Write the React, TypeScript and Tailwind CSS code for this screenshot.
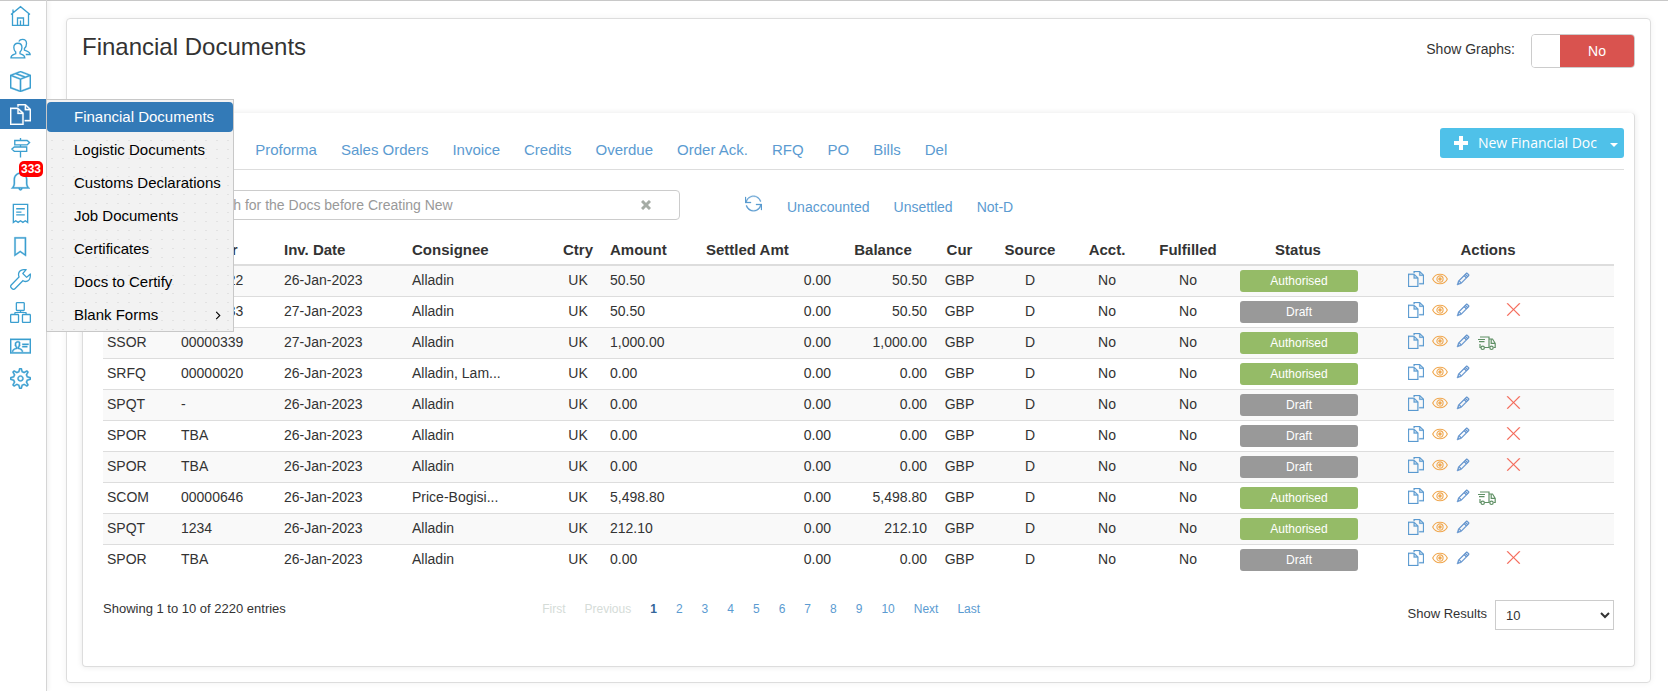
import React, { useState } from 'react';
import {
  TfiPackage,
  TfiFiles,
  TfiBell,
  TfiBookmark,
  TfiSettings,
  TfiPencil,
  TfiClose,
  TfiReload,
  TfiIdBadge,
} from 'react-icons/tfi';
import { SlWrench, SlOrganization } from 'react-icons/sl';

type IconProps = { className?: string };

type Doc = {
  type: string;
  number: string;
  date: string;
  consignee: string;
  amount: string;
  status: 'Authorised' | 'Draft';
  canDelete?: boolean;
  canShip?: boolean;
};

const HomeIcon: React.FC<IconProps> = ({ className }) => (
  <svg viewBox="0 0 21 21" className={className} fill="none" stroke="currentColor" strokeWidth="1.3">
    <path d="M1 9.500L10.500 1.700L20 9.500M2.500 8.500V20.300h16V8.500M3 7.500V4.500M7.500 20v-7h6v7M10.500 15.500v4.500" />
  </svg>
);

const UsersIcon: React.FC<IconProps> = ({ className }) => (
  <svg viewBox="0 0 22 22" className={className} fill="none" stroke="currentColor" strokeWidth="1.4">
    <path d="M1 20.800c0-3 2.500-3.300 5-4.300v-1.700C4.500 13.500 4 11.500 4 10c0-3 1.700-4.500 4.300-4.500s4.200 1.500 4.200 4.500c0 1.500-.5 3.500-2 4.800v1.700c2.500 1 5 1.300 5 4.300z" />
    <path d="M9.200 3.700c.8-1.500 2-2.200 3.800-2.200 2.800 0 4.300 1.700 4.300 4.300 0 2-.8 4-2.200 5.300v1.500c2.500 1 6 1.500 6 4.700h-4.600" />
  </svg>
);

const SignpostIcon: React.FC<IconProps> = ({ className }) => (
  <svg viewBox="0 0 22 22" className={className} fill="none" stroke="currentColor" strokeWidth="1.4">
    <path d="M5 3.700h13l2.500 2.200L18 8.200H5zM17.500 10.500h-13L2 12.700 4.500 15h13zM11 1v2.700M11 8.200v2.300M11 15v6.500" />
  </svg>
);

const ReceiptIcon: React.FC<IconProps> = ({ className }) => (
  <svg viewBox="0 0 22 22" className={className} fill="none" stroke="currentColor" strokeWidth="1.4">
    <path d="M3.500 1.500h15v18.800l-2.500-1.700-2.500 1.700-2.500-1.700-2.500 1.700-2.500-1.700-2.500 1.700z" />
    <path d="M6.500 6h9M6.500 9.500h5.500M6.500 12.500h9" />
  </svg>
);

const EyeIcon: React.FC<IconProps> = ({ className }) => (
  <svg viewBox="0 0 16 16" className={className} fill="none" stroke="currentColor" strokeWidth="1.100">
    <path d="M.7 8C2 5 4.700 3.200 8 3.200S14 5 15.300 8C14 11 11.300 12.800 8 12.800S2 11 .7 8z" />
    <circle cx="8" cy="8" r="3.100" />
    <circle cx="8" cy="8" r="1.200" fill="currentColor" />
  </svg>
);

const TruckIcon: React.FC<IconProps> = ({ className }) => (
  <svg viewBox="0 0 18 18" className={className} fill="none" stroke="currentColor" strokeWidth="1.200">
    <path d="M2 3h9v10.500M0 5.500h7M1 7.700h5.500M2 10v3.500h1M6.500 13.500h5M11 5h3.500l2.700 4.300v4.200h-1.700M13.200 5.500v3.800h4" />
    <circle cx="4.700" cy="13.800" r="1.700" />
    <circle cx="13.500" cy="13.800" r="1.700" />
  </svg>
);

const docs: Doc[] = [
  { type: 'SINV', number: '00000322', date: '26-Jan-2023', consignee: 'Alladin', amount: '50.50', status: 'Authorised' },
  { type: 'SINV', number: '00000333', date: '27-Jan-2023', consignee: 'Alladin', amount: '50.50', status: 'Draft', canDelete: true },
  { type: 'SSOR', number: '00000339', date: '27-Jan-2023', consignee: 'Alladin', amount: '1,000.00', status: 'Authorised', canShip: true },
  { type: 'SRFQ', number: '00000020', date: '26-Jan-2023', consignee: 'Alladin, Lam...', amount: '0.00', status: 'Authorised' },
  { type: 'SPQT', number: '-', date: '26-Jan-2023', consignee: 'Alladin', amount: '0.00', status: 'Draft', canDelete: true },
  { type: 'SPOR', number: 'TBA', date: '26-Jan-2023', consignee: 'Alladin', amount: '0.00', status: 'Draft', canDelete: true },
  { type: 'SPOR', number: 'TBA', date: '26-Jan-2023', consignee: 'Alladin', amount: '0.00', status: 'Draft', canDelete: true },
  { type: 'SCOM', number: '00000646', date: '26-Jan-2023', consignee: 'Price-Bogisi...', amount: '5,498.80', status: 'Authorised', canShip: true },
  { type: 'SPQT', number: '1234', date: '26-Jan-2023', consignee: 'Alladin', amount: '212.10', status: 'Authorised' },
  { type: 'SPOR', number: 'TBA', date: '26-Jan-2023', consignee: 'Alladin', amount: '0.00', status: 'Draft', canDelete: true },
];

const navItems = [
  { label: 'Home', icon: HomeIcon },
  { label: 'Contacts', icon: UsersIcon },
  { label: 'Products', icon: TfiPackage, thin: true },
  { label: 'Documents', icon: TfiFiles, thin: true, active: true },
  { label: 'Logistics', icon: SignpostIcon },
  { label: 'Alerts', icon: TfiBell, thin: true, count: 333 },
  { label: 'Receipts', icon: ReceiptIcon },
  { label: 'Bookmarks', icon: TfiBookmark, thin: true },
  { label: 'Tools', icon: SlWrench },
  { label: 'Organisation', icon: SlOrganization },
  { label: 'Profile', icon: TfiIdBadge, thin: true },
  { label: 'Settings', icon: TfiSettings, thin: true },
];

const menuItems = [
  'Financial Documents',
  'Logistic Documents',
  'Customs Declarations',
  'Job Documents',
  'Certificates',
  'Docs to Certify',
  'Blank Forms',
];

const tabs = ['All', 'Quotations', 'Proforma', 'Sales Orders', 'Invoice', 'Credits', 'Overdue', 'Order Ack.', 'RFQ', 'PO', 'Bills', 'Del'];
const filters = ['Unaccounted', 'Unsettled', 'Not-D'];
const pages = ['1', '2', '3', '4', '5', '6', '7', '8', '9', '10', 'Next', 'Last'];

const Sidebar: React.FC = () => (
  <nav className="relative z-10 w-[47px] shrink-0 border-r border-[#d5d5d5] shadow-[2px_0_4px_rgba(0,0,0,0.05)]">
    <ul className="flex flex-col gap-[3px]">
      {navItems.map(({ label, icon: Icon, thin, active, count }) => (
        <li key={label} className="relative">
          <a
            href="#"
            aria-label={label}
            className={`flex h-[30px] items-center pl-[10px] ${active ? 'bg-[#337ab7] text-white' : 'text-[#3b9fd0]'}`}
          >
            <Icon className={thin ? 'size-[21px] stroke-[0.3]' : 'size-[21px]'} />
          </a>
          {count && (
            <span className="absolute -top-1 left-[19px] rounded-[5px] bg-[#f00] px-[2px] text-xs leading-4 font-bold text-white">
              {count}
            </span>
          )}
          {active && <SubMenu />}
        </li>
      ))}
    </ul>
  </nav>
);

const SubMenu: React.FC = () => (
  <ul className="absolute top-0 left-[46px] z-20 flex w-[188px] flex-col gap-[3px] border border-[#c8c8c8] bg-[#f2f2f2] bg-[radial-gradient(#e2e2e2_1px,transparent_1px)] bg-[size:11px_9px] pt-[2px] pb-[1px]">
    {menuItems.map((item, i) => (
      <li key={item}>
        <a
          href="#"
          className={`flex h-[30px] items-center justify-between rounded pr-3 pl-[27px] text-[15px] whitespace-nowrap ${
            i === 0 ? 'bg-[#337ab7] text-white' : 'text-black'
          }`}
        >
          {item}
          {item === 'Blank Forms' && (
            <svg viewBox="0 0 6 10" className="h-[9px] w-[6px]" fill="none" stroke="currentColor" strokeWidth="1.2">
              <path d="M1 1l4 4-4 4" />
            </svg>
          )}
        </a>
      </li>
    ))}
  </ul>
);

const DocsTable: React.FC = () => (
  <table className="w-full table-fixed text-sm text-[#333]">
    <colgroup>
      <col className="w-[74px]" />
      <col className="w-[103px]" />
      <col className="w-[128px]" />
      <col className="w-[142px]" />
      <col className="w-[56px]" />
      <col className="w-[96px]" />
      <col className="w-[133px]" />
      <col className="w-[96px]" />
      <col className="w-[57px]" />
      <col className="w-[84px]" />
      <col className="w-[70px]" />
      <col className="w-[92px]" />
      <col className="w-[128px]" />
      <col className="w-[252px]" />
    </colgroup>
    <thead>
      <tr className="h-[31px] border-b-2 border-[#ddd] text-[15px] *:px-1 *:pt-[2px] *:whitespace-nowrap">
        <th className="text-left">Type</th>
        <th className="text-left">Number</th>
        <th className="text-left">Inv. Date</th>
        <th className="text-left">Consignee</th>
        <th>Ctry</th>
        <th className="text-left">Amount</th>
        <th className="text-left">Settled Amt</th>
        <th>Balance</th>
        <th>Cur</th>
        <th>Source</th>
        <th>Acct.</th>
        <th>Fulfilled</th>
        <th>Status</th>
        <th>Actions</th>
      </tr>
    </thead>
    <tbody>
      {docs.map((doc, i) => (
        <tr key={i} className="h-[31px] border-b border-[#ddd] *:px-1 last:border-b-0 odd:bg-[#f9f9f9]">
          <td className="pb-px">{doc.type}</td>
          <td className="pb-px">{doc.number}</td>
          <td className="pb-px">{doc.date}</td>
          <td className="pb-px">{doc.consignee}</td>
          <td className="pb-px text-center">UK</td>
          <td className="pb-px">{doc.amount}</td>
          <td className="pb-px text-right">0.00</td>
          <td className="pb-px text-right">{doc.amount}</td>
          <td className="pb-px text-center">GBP</td>
          <td className="pb-px text-center">D</td>
          <td className="pb-px text-center">No</td>
          <td className="pb-px text-center">No</td>
          <td className="pt-px">
            <span
              className={`ml-[2px] block h-[22px] rounded-[3px] text-center text-xs leading-[22px] text-white ${
                doc.status === 'Draft' ? 'bg-[#999]' : 'bg-[#95bb67]'
              }`}
            >
              {doc.status}
            </span>
          </td>
          <td className="pb-px">
            <div className="flex h-[22px] items-center gap-2 pb-[3px] pl-[42px]">
              <button aria-label="Copy" className="text-[#5b9bd1]">
                <TfiFiles className="size-4 stroke-[0.3]" />
              </button>
              <button aria-label="View" className="text-[#f0a850]">
                <EyeIcon className="size-4" />
              </button>
              <button aria-label="Edit" className="text-[#5b8fcb]">
                <TfiPencil className="size-[14px] stroke-[0.6]" />
              </button>
              <span className="w-5">
                {doc.canShip && (
                  <button aria-label="Ship" className="block pt-1 text-[#5f9065]">
                    <TruckIcon className="size-[18px]" />
                  </button>
                )}
              </span>
              {doc.canDelete && (
                <button aria-label="Delete" className="text-[#f4604f]">
                  <TfiClose className="size-[15px] stroke-[0.3]" />
                </button>
              )}
            </div>
          </td>
        </tr>
      ))}
    </tbody>
  </table>
);

const App: React.FC = () => {
  const [search, setSearch] = useState('');
  const [results, setResults] = useState('10');

  return (
    <div className="flex min-h-screen bg-white font-['Liberation_Sans',Arial,sans-serif] text-[#333] shadow-[inset_0_1px_0_#c8c8c8]">
      <Sidebar />
      <main className="min-w-0 flex-1 pt-[18px] pr-[17px] pb-2 pl-[19px]">
        <section className="rounded border border-[#ddd] px-[15px] pb-[15px] shadow-[0_0_6px_rgba(0,0,0,0.06)]">
          <header className="flex h-[94px] items-start justify-between pt-[11px]">
            <h1 className="pt-[1px] text-2xl leading-8">Financial Documents</h1>
            <div className="flex items-center gap-4 pt-1">
              <label htmlFor="show-graphs" className="pb-1 text-sm">
                Show Graphs:
              </label>
              <button
                id="show-graphs"
                role="switch"
                aria-checked="false"
                className="flex h-[34px] w-[104px] overflow-hidden rounded border border-[#ccc] text-sm text-white"
              >
                <span className="h-full w-7 bg-white"></span>
                <span className="flex h-full flex-1 items-center justify-center bg-[#d9534f]">No</span>
              </button>
            </div>
          </header>

          <div className="rounded border-x border-b border-[#ddd] pt-[15px] pr-[10px] pb-9 pl-5 shadow-[0_0_6px_rgba(0,0,0,0.09)]">
            <div className="flex h-[42px] items-start justify-between border-b border-[#ddd]">
              <ul className="flex gap-6 pt-[10px] pl-[15px] text-[15px] leading-6 text-[#5b9bd1]">
                {tabs.map((tab) => (
                  <li key={tab}>
                    <a href="#">{tab}</a>
                  </li>
                ))}
              </ul>
              <button className="flex h-[30px] items-center rounded-[3px] bg-[#4fc1e9] pr-[6px] pl-[14px] font-['Open_Sans',sans-serif] text-sm text-white">
                <svg viewBox="0 0 14 14" className="size-[14px]" fill="currentColor">
                  <path d="M5 0h4v5h5v4H9v5H5V9H0V5h5z" />
                </svg>
                <span className="pr-[13px] pl-[10px]">New Financial Doc</span>
                <svg viewBox="0 0 8 4" className="mt-1 h-1 w-2" fill="currentColor">
                  <path d="M0 0h8L4 4z" />
                </svg>
              </button>
            </div>

            <div className="flex items-center pt-5 pr-[10px]">
              <div className="relative ml-8 w-[545px]">
                <input
                  type="text"
                  aria-label="Search documents"
                  value={search}
                  onChange={(e) => setSearch(e.target.value)}
                  placeholder="Please Search for the Docs before Creating New"
                  className="h-[30px] w-full rounded border border-[#ccc] pr-12 pl-[14px] text-sm placeholder:text-[#999]"
                />
                <button aria-label="Clear" onClick={() => setSearch('')} className="absolute top-[10px] right-[29px] text-[#a5aca5]">
                  <svg viewBox="0 0 10 10" className="size-[10px]" stroke="currentColor" strokeWidth="3">
                    <path d="M1 1l8 8M9 1L1 9" />
                  </svg>
                </button>
              </div>
              <a href="#" aria-label="Refresh" className="ml-[65px] pb-1 text-[#5b9bd1]">
                <TfiReload className="size-[17px] stroke-[0.3]" />
              </a>
              <ul className="ml-[25px] flex gap-6 pt-1 text-sm text-[#5b9bd1]">
                {filters.map((filter) => (
                  <li key={filter}>
                    <a href="#">{filter}</a>
                  </li>
                ))}
              </ul>
            </div>

            <div className="pt-[14px] pr-[10px]">
              <DocsTable />
              <footer className="flex items-start pt-4">
                <p className="w-[29%] pt-2 text-[13px] leading-5">Showing 1 to 10 of 2220 entries</p>
                <ul className="flex flex-1 gap-[19px] pt-2 pl-px text-xs leading-5 text-[#5b9bd1]">
                  <li className="text-[#d5dcd8]">First</li>
                  <li className="text-[#d5dcd8]">Previous</li>
                  {pages.map((page) => (
                    <li key={page}>
                      <a href="#" className={page === '1' ? 'font-bold text-[#34669a]' : ''}>
                        {page}
                      </a>
                    </li>
                  ))}
                </ul>
                <div className="flex items-center gap-2 pt-[9px] text-[13px]">
                  <label htmlFor="show-results" className="pb-[2px]">
                    Show Results
                  </label>
                  <select
                    id="show-results"
                    value={results}
                    onChange={(e) => setResults(e.target.value)}
                    className="h-[30px] w-[119px] border border-[#ccc] bg-white pl-[6px]"
                  >
                    <option>10</option>
                    <option>25</option>
                    <option>50</option>
                    <option>100</option>
                  </select>
                </div>
              </footer>
            </div>
          </div>
        </section>
      </main>
    </div>
  );
};

export default App;
